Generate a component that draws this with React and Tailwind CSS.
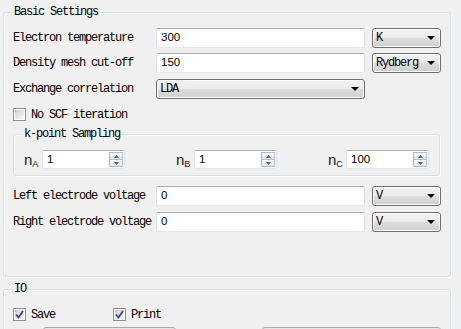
import React from 'react';

const mono = "font-['Liberation_Mono',monospace] text-[12px] tracking-[-1.2px] text-black";

function Group({ title, className, children }) {
  return (
    <div className={`relative border border-[#d5dfe5] rounded-[3px] shadow-[inset_1px_1px_0_#ffffff,1px_1px_0_#ffffff] ${className}`}>
      <span className={`absolute -top-[8px] left-[9px] bg-[#f0f0f0] px-[1px] leading-[14px] ${mono}`}>{title}</span>
      {children}
    </div>
  );
}

function TextBox({ value, className }) {
  return (
    <div className={`h-[20px] flex items-center bg-white border border-[#dbdfe6] border-t-[#abadb3] border-b-[#e3e9ef] rounded-[2px] pl-[4px] font-['Liberation_Sans',sans-serif] text-[11.5px] text-black ${className}`}>
      {value}
    </div>
  );
}

function Combo({ value, className }) {
  return (
    <div className={`h-[20px] flex items-center justify-between rounded-[3px] border border-[#707070] bg-[linear-gradient(to_bottom,#f2f2f2_0%,#ebebeb_50%,#dddddd_50%,#cfcfcf_100%)] shadow-[inset_0_0_0_1px_#fcfcfc] pl-[3px] pr-[5px] ${mono} ${className}`}>
      <span>{value}</span>
      <svg width="8" height="4" viewBox="0 0 8 4">
        <polygon points="0,0 8,0 4,4" fill="#000" />
      </svg>
    </div>
  );
}

function Check({ checked, label, className }) {
  return (
    <div className={`flex items-center h-[13px] ${className}`}>
      <div className="w-[13px] h-[13px] border border-[#8f8f8f] bg-white p-[1px]">
        <div className="w-full h-full bg-[linear-gradient(135deg,#cbcfd5,#f6f6f6)] flex items-center justify-center">
          {checked && (
            <svg width="9" height="9" viewBox="0 0 9 9">
              <path d="M1 4.5 L3.5 7.5 L8 1" stroke="#3b4d7a" strokeWidth="1.8" fill="none" />
            </svg>
          )}
        </div>
      </div>
      <span className={`ml-[5px] ${mono}`}>{label}</span>
    </div>
  );
}

function Spin({ sub, value }) {
  return (
    <div className="w-[101px] flex items-center">
      <div className="w-[18px] flex items-end font-['Liberation_Sans',sans-serif] text-[#222]">
        <span className="text-[15px] leading-[15px]">n</span>
        <span className="text-[9px] leading-[9px] -mb-[2px]">{sub}</span>
      </div>
      <div className="flex-1 h-[19px] flex items-center bg-white border border-[#dbdfe6] border-t-[#abadb3] border-b-[#e3e9ef] rounded-[2px] pl-[4px] font-['Liberation_Sans',sans-serif] text-[11.5px] text-black">
        <span className="flex-1">{value}</span>
        <div className="w-[14px] h-[15px] mr-[1px] flex flex-col">
          <div className="flex-1 flex items-center justify-center border border-[#b5bcc6] bg-[linear-gradient(to_bottom,#f8f8f8,#e3e6ea)]">
            <svg width="5" height="3" viewBox="0 0 5 3"><polygon points="0,3 5,3 2.5,0" fill="#4d6185" /></svg>
          </div>
          <div className="flex-1 flex items-center justify-center border border-t-0 border-[#b5bcc6] bg-[linear-gradient(to_bottom,#f8f8f8,#e3e6ea)]">
            <svg width="5" height="3" viewBox="0 0 5 3"><polygon points="0,0 5,0 2.5,3" fill="#4d6185" /></svg>
          </div>
        </div>
      </div>
    </div>
  );
}

function Row({ label, children, className }) {
  return (
    <div className={`flex items-center h-[20px] ${className}`}>
      <span className={`w-[143px] ${mono}`}>{label}</span>
      {children}
    </div>
  );
}

export default function App() {
  return (
    <div className="w-[461px] h-[329px] overflow-hidden bg-[#f0f0f0] pl-[3px] pt-[12px] flex flex-col">
      <Group title="Basic Settings" className="w-[448px] h-[265px] shrink-0 pt-[15px] pl-[9px]">
        <Row label="Electron temperature">
          <TextBox value="300" className="w-[209px]" />
          <Combo value="K" className="w-[69px] ml-[7px]" />
        </Row>
        <Row label="Density mesh cut-off" className="mt-[5px]">
          <TextBox value="150" className="w-[209px]" />
          <Combo value="Rydberg" className="w-[69px] ml-[7px]" />
        </Row>
        <Row label="Exchange correlation" className="mt-[6px]">
          <Combo value="LDA" className="w-[209px]" />
        </Row>
        <Check label="No SCF iteration" className="mt-[9px]" />
        <Group title="k-point Sampling" className="w-[427px] h-[42px] mt-[13px] px-[10px] pt-[15px] flex justify-between items-start">
          <Spin sub="A" value="1" />
          <Spin sub="B" value="1" />
          <Spin sub="C" value="100" />
        </Group>
        <Row label="Left electrode voltage" className="mt-[10px]">
          <TextBox value="0" className="w-[209px]" />
          <Combo value="V" className="w-[69px] ml-[7px]" />
        </Row>
        <Row label="Right electrode voltage" className="mt-[6px]">
          <TextBox value="0" className="w-[209px]" />
          <Combo value="V" className="w-[69px] ml-[7px]" />
        </Row>
      </Group>
      <Group title="IO" className="w-[448px] h-[80px] shrink-0 mt-[12px] pt-[18px] pl-[9px]">
        <div className="flex">
          <Check checked label="Save" className="w-[100px]" />
          <Check checked label="Print" />
        </div>
        <div className="flex mt-[6px]">
          <div className="ml-[30px] w-[133px] h-[22px] rounded-[3px] border border-[#acacac] bg-[#e5e5e5]" />
          <div className="ml-[86px] w-[179px] h-[22px] rounded-[3px] border border-[#acacac] bg-[#e5e5e5]" />
        </div>
      </Group>
    </div>
  );
}
